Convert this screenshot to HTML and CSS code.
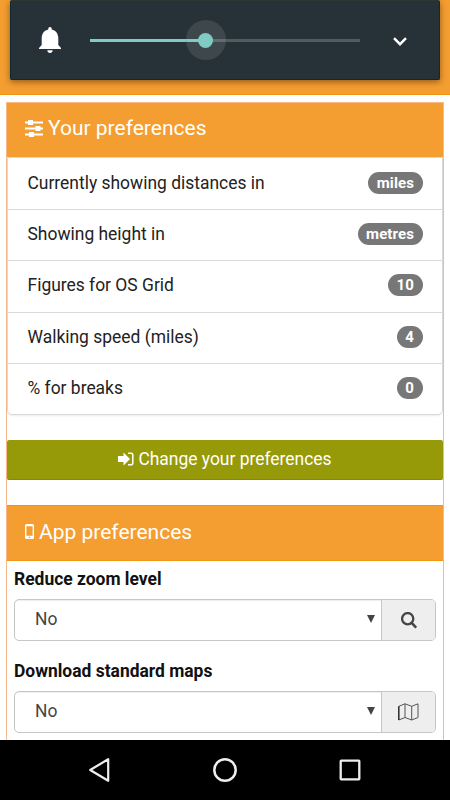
FILE: index.html
```html
<!DOCTYPE html>
<html lang="en">
<head>
<meta charset="utf-8">
<meta name="viewport" content="width=device-width">
<title>Preferences</title>
<link rel="stylesheet" href="styles.css">
</head>
<body>
<div class="screen">
  <header class="top">
    <div class="volume">
      <svg class="bell" viewBox="0 0 22 26" width="22" height="26"><path d="M11 0C9.900 0 9.300.8 9.300 1.800V2.500C5.500 3.300 2.700 6.500 2.700 11V18L0 21V22H22V21L19.300 18V11C19.300 6.500 16.500 3.300 12.700 2.500V1.800C12.700.8 12.100 0 11 0ZM8.300 23.300H13.700C13.500 25 12.500 26 11 26S8.500 25 8.300 23.300Z" fill="#fff"/></svg>
      <div class="slider"><div class="filled"></div><div class="halo"><div class="thumb"></div></div><div class="rest"></div></div>
      <svg class="chevron" viewBox="0 0 14 9" width="14" height="9"><path d="M1 1.200L7 7.200L13 1.200" fill="none" stroke="#fff" stroke-width="2.500"/></svg>
    </div>
  </header>
  <main class="panel">
    <h2 class="heading first">
      <svg class="sliders" viewBox="0 0 18 17" width="18" height="17"><path d="M0 2.500H18M0 8.500H18M0 14.500H18" stroke="#fff" stroke-width="2"/><path d="M3 0H8V5H3ZM10.500 6H15.500V11H10.500ZM4 12H9V17H4Z" fill="#fff"/></svg>
      <span>Your preferences</span>
    </h2>
    <ul class="list">
      <li><span>Currently showing distances in</span><b>miles</b></li>
      <li><span>Showing height in</span><b>metres</b></li>
      <li><span>Figures for OS Grid</span><b>10</b></li>
      <li><span>Walking speed (miles)</span><b>4</b></li>
      <li><span>% for breaks</span><b>0</b></li>
    </ul>
    <button class="change">
      <svg viewBox="0 0 16 14" width="16" height="14"><path d="M0 4H5.500V.5L12 7L5.500 13.500V10H0Z" fill="#fff"/><path d="M10 1.200H13Q14.800 1.200 14.800 3V11Q14.800 12.800 13 12.800H10" fill="none" stroke="#fff" stroke-width="1.500"/></svg>
      <span>Change your preferences</span>
    </button>
    <h2 class="heading second">
      <svg class="phone" viewBox="0 0 9 15" width="9" height="15"><path fill-rule="evenodd" d="M1.500 0H7.500Q9 0 9 1.500V13.500Q9 15 7.500 15H1.500Q0 15 0 13.500V1.500Q0 0 1.500 0ZM1.400 2.300V11.800H7.600V2.300ZM3.800 12.700V13.900H5.200V12.700Z" fill="#fff"/></svg>
      <span>App preferences</span>
    </h2>
    <div class="field">
      <div class="label">Reduce zoom level</div>
      <div class="group">
        <div class="select"><span>No</span><i></i></div>
        <div class="addon"><svg viewBox="0 0 16 17" width="16" height="17"><circle cx="6.700" cy="6.700" r="5.600" fill="none" stroke="#444" stroke-width="2.300"/><path d="M10.700 10.900L15.200 15.700" stroke="#444" stroke-width="2.600"/></svg></div>
      </div>
    </div>
    <div class="field">
      <div class="label">Download standard maps</div>
      <div class="group">
        <div class="select"><span>No</span><i></i></div>
        <div class="addon"><svg viewBox="0 0 21 18" width="21" height="18"><path d="M.8 3.300L7 .8L13.700 3.300L20 .8V14.500L13.700 17L7 14.500L.8 17ZM7 .8V14.500M13.700 3.300V17" fill="none" stroke="#555" stroke-width="1"/><path d="M.8 3.300V17" stroke="#222" stroke-width="1.200"/></svg></div>
      </div>
    </div>
  </main>
  <nav class="nav">
    <svg viewBox="0 0 22 24" width="22" height="24"><path d="M19.200 1.200V22.800L1.200 12Z" fill="none" stroke="#eee" stroke-width="2.200" stroke-linejoin="round"/></svg>
    <svg viewBox="0 0 24 24" width="24" height="24"><circle cx="12" cy="12" r="10.700" fill="none" stroke="#eee" stroke-width="2.500"/></svg>
    <svg viewBox="0 0 22 22" width="22" height="22"><rect x="1.700" y="1.700" width="18.600" height="18.600" rx=".5" fill="none" stroke="#eee" stroke-width="2.300"/></svg>
  </nav>
</div>
</body>
</html>
```
FILE: styles.css
```css
* { box-sizing: border-box; }
body { margin: 0; font-family: Roboto, sans-serif; color: #222; }
svg { display: block; flex: none; }
.screen { width: 450px; height: 800px; overflow: hidden; display: flex; flex-direction: column; background: #fff; }
.top { flex: none; height: 95px; padding: 0 10px; background: #f49d31; border-bottom: 1px solid #f29513; }
.volume { height: 80px; background: #273238; border: 1px solid #102a35; border-top-color: #2d3535; border-radius: 2px; box-shadow: 0 2px 6px rgba(70, 40, 0, .55); display: flex; align-items: center; padding: 0 32px 0 28px; }
.slider { width: 270px; margin-left: 29px; display: flex; align-items: center; }
.filled { width: 95.5px; height: 3px; background: #80cbc4; }
.halo { width: 40px; height: 40px; border-radius: 50%; display: flex; align-items: center; justify-content: center; background: linear-gradient(#80cbc4, #80cbc4) 0 50% / 20px 3px no-repeat, linear-gradient(#646c71, #646c71) 20px 50% / 20px 3px no-repeat, #3d474c; }
.thumb { width: 15px; height: 15px; border-radius: 50%; background: #80cbc4; }
.rest { flex: 1; height: 3px; background: #525b60; }
.chevron { margin-left: auto; margin-top: 2px; }
.panel { margin: 7px 6px 0; flex: 1; min-height: 0; overflow: hidden; border: 1px solid #f7b98a; border-bottom: 0; }
.heading { margin: 0; display: flex; align-items: center; background: #f49d31; color: #fff; font-size: 21px; font-weight: 400; line-height: 26px; padding-left: 18px; }
.first { height: 54px; padding-bottom: 4px; }
.second { height: 56px; padding-bottom: 3px; border: solid #f29513; border-width: 1px 0; margin-top: 25px; }
.sliders { margin-right: 5px; margin-top: 1px; }
.phone { margin-right: 5px; }
.list { list-style: none; margin: 0; padding: 0; height: 258px; border: 1px solid #d9d9d9; border-radius: 0 0 5px 5px; box-shadow: 0 1px 2px rgba(0, 0, 0, .08); display: grid; grid-template-rows: repeat(5, 1fr); }
.list li { display: flex; align-items: center; justify-content: space-between; padding: 0 19.500px 2px 19.500px; font-size: 17.450px; border-top: 1px solid #d9d9d9; }
.list li:first-child { border-top: 0; }
.list b { height: 22px; line-height: 22px; border-radius: 11px; background: #777; color: #fff; padding: 0 8.500px; font-size: 15px; letter-spacing: .1px; }
.change { font: 17.450px/22px Roboto, sans-serif; color: #fff; width: 100%; height: 40px; margin-top: 25px; padding: 0 0 2px; border: 0; border-bottom: 1px solid #868a08; border-radius: 2px; background: #969a09; display: flex; align-items: center; justify-content: center; gap: 4px; }
.field { padding: 0 7px; height: 92px; }
.label { height: 38px; line-height: 36px; font-size: 17.450px; font-weight: 700; color: #111; }
.group { height: 42px; display: flex; border: 1px solid #c6c6c6; border-radius: 5px; overflow: hidden; box-shadow: inset 0 1px 1px rgba(0, 0, 0, .07); }
.select { flex: 1; display: flex; align-items: center; justify-content: space-between; padding: 0 6px 2px 20px; font-size: 17.450px; color: #444; }
.select i { width: 8px; height: 8px; background: #444; clip-path: polygon(0 0, 100% 0, 50% 100%); }
.addon { width: 54px; border-left: 1px solid #c6c6c6; background: #eee; display: flex; align-items: center; justify-content: center; }
.nav { flex: none; height: 60px; background: #000; display: flex; align-items: center; justify-content: space-between; padding: 0 89px; }
```
